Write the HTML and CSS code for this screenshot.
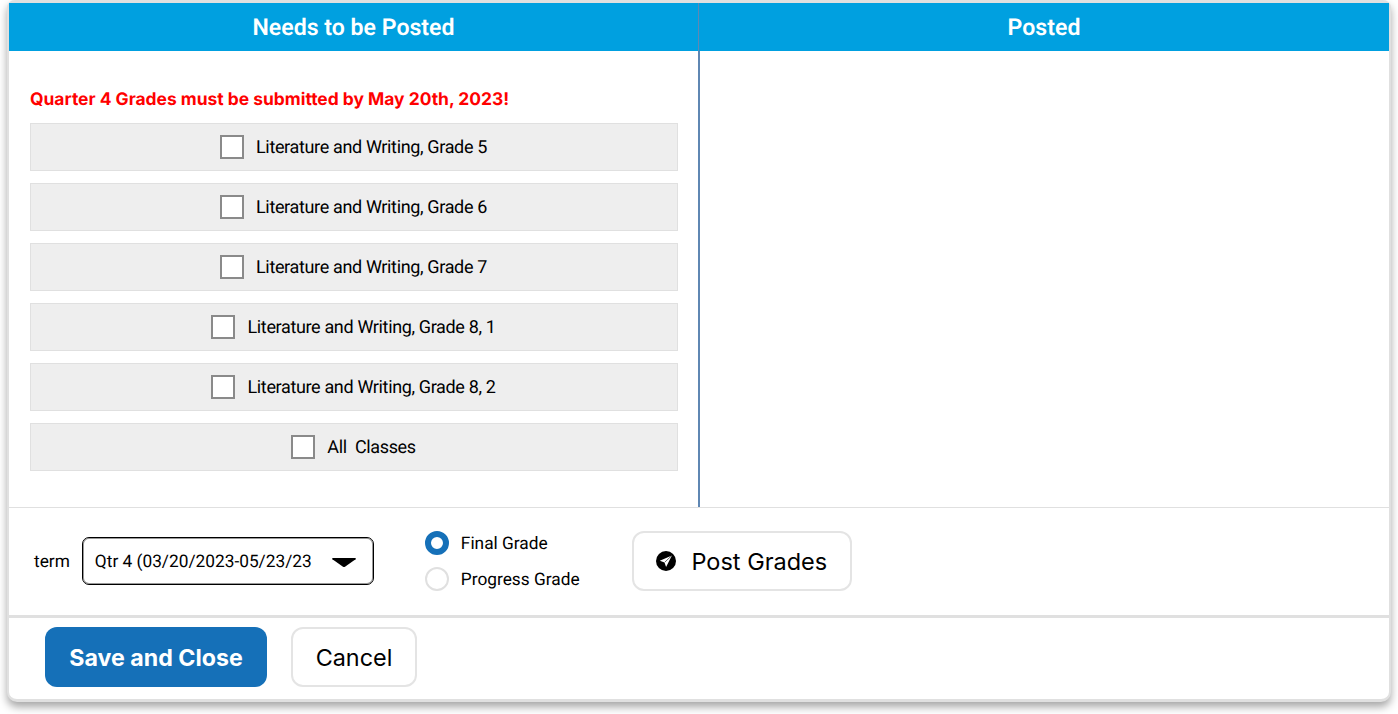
FILE: index.html
```html
<!DOCTYPE html>
<html lang="en">
<head>
<meta charset="utf-8">
<title>Post Grades</title>
<link rel="stylesheet" href="styles.css">
</head>
<body>
<main class="card">
  <div class="columns">
    <section class="col col-left">
      <h2 class="col-head">Needs to be Posted</h2>
      <div class="col-body">
        <p class="notice">Quarter 4 Grades must be submitted by May 20th, 2023!</p>
        <div class="row"><span class="check"></span><span>Literature and Writing, Grade 5</span></div>
        <div class="row"><span class="check"></span><span>Literature and Writing, Grade 6</span></div>
        <div class="row"><span class="check"></span><span>Literature and Writing, Grade 7</span></div>
        <div class="row"><span class="check"></span><span>Literature and Writing, Grade 8, 1</span></div>
        <div class="row"><span class="check"></span><span>Literature and Writing, Grade 8, 2</span></div>
        <div class="row"><span class="check"></span><span class="pre">All  Classes</span></div>
      </div>
    </section>
    <section class="col col-right">
      <h2 class="col-head">Posted</h2>
    </section>
  </div>
  <div class="options">
    <span class="term-label opt-text">term</span>
    <div class="select">
      <span class="opt-text">Qtr 4 (03/20/2023-05/23/23</span>
      <svg class="caret" width="24" height="10" viewBox="0 0 24 10"><path d="M1 0H23Q24.4 0 23.6 1.3L13 8.8Q12 9.4 11 8.8L.4 1.3Q-.4 0 1 0Z" fill="#000"/></svg>
    </div>
    <div class="radios">
      <div class="radio-row"><span class="radio radio-on"></span><span class="opt-text">Final Grade</span></div>
      <div class="radio-row"><span class="radio"></span><span class="opt-text">Progress Grade</span></div>
    </div>
    <button class="btn btn-post">
      <svg class="post-icon" width="20" height="20" viewBox="0 0 20 20"><circle cx="10" cy="10" r="10" fill="#000"/><path d="M15.9 4.4 3.8 9.8l4.7 1.6 1.6 4.7Z" fill="#fff"/><path d="M15.9 4.4 8.8 11.2" stroke="#000" stroke-width=".6"/></svg>
      <span>Post Grades</span>
    </button>
  </div>
  <div class="actions">
    <button class="btn btn-primary">Save and Close</button>
    <button class="btn btn-cancel">Cancel</button>
  </div>
</main>
</body>
</html>
```
FILE: styles.css
```css
* { box-sizing: border-box; }
html, body { margin: 0; height: 100%; background: #fff; }
body { padding: 0 7px; font-family: Inter, "Liberation Sans", sans-serif; color: #000; overflow: hidden; text-rendering: geometricPrecision; }
.card {
  width: 1384px;
  height: 702px;
  border: solid #e0e0e0;
  border-width: 3px 2px 3px 2px;
  border-radius: 8px 8px 10px 10px;
  box-shadow: 0 5px 8px rgba(0, 0, 0, .35);
  background: #fff;
  display: flex;
  flex-direction: column;
}
.columns { display: flex; height: 505px; border-bottom: 1px solid #e0e0e0; }
.col-left { flex: 0 0 691px; border-right: 2px solid #5f87b3; }
.col-right { flex: 1; margin-left: -1px; }
.col-head {
  margin: 0;
  height: 48px;
  background: #00a0e0;
  color: #fff;
  font: 600 23.1px/49px Roboto, sans-serif;
  text-align: center;
}
.col-body { padding: 36px 20px 0 21px; font-family: Roboto, sans-serif; }
.notice { margin: 0 0 12px; height: 24px; font: 700 17.42px/26px Inter, sans-serif; color: #f00; }
.row {
  height: 48px;
  margin-bottom: 12px;
  padding-right: 1px;
  background: #eee;
  border: 1px solid #e0e0e0;
  display: flex;
  align-items: center;
  justify-content: center;
  gap: 12px;
  font-size: 18px;
  letter-spacing: -.35px;
}
.check { width: 24px; height: 24px; background: #fff; border: 2px solid #8a8a8a; }
.pre { white-space: pre; }
.options {
  height: 110px;
  padding: 0 0 1px 25px;
  border-bottom: 3px solid #e0e0e0;
  display: flex;
  align-items: center;
  font-family: Roboto, sans-serif;
  font-size: 17.3px;
}
.opt-text { padding-top: 2px; }
.term-label { margin-right: 12px; }
.select {
  width: 292px;
  height: 48px;
  border: 1px solid #000;
  box-shadow: inset 0 0 0 1px rgba(0, 0, 0, .4);
  border-radius: 7px;
  display: flex;
  align-items: center;
  justify-content: space-between;
  padding: 0 17px 0 12px;
}
.caret { margin-top: 4px; }
.radios { margin-left: 51px; display: flex; flex-direction: column; gap: 12px; width: 207px; }
.radio-row { display: flex; align-items: center; gap: 12px; height: 24px; }
.radio { width: 24px; height: 24px; border-radius: 50%; border: 2px solid #e0e0e0; background: #fff; }
.radio-on { border: 6.5px solid #1570b8; }
.btn { font-family: Inter, sans-serif; border-radius: 12px; cursor: pointer; }
.btn-post {
  width: 220px;
  height: 60px;
  background: #fff;
  border: 2px solid #e4e4e4;
  display: flex;
  align-items: center;
  justify-content: center;
  gap: 15px;
  font-size: 23.5px;
  color: #000;
}
.actions { flex: 1; display: flex; align-items: flex-start; gap: 24px; padding: 9px 0 0 36px; }
.btn-primary {
  width: 222px;
  height: 60px;
  padding: 2px 0 0;
  background: #1570b8;
  border: 0;
  color: #fff;
  font-size: 23.2px;
  font-weight: 700;
}
.btn-cancel {
  width: 126px;
  height: 60px;
  background: #fff;
  border: 2px solid #e4e4e4;
  font-size: 23.4px;
  color: #000;
}
```
